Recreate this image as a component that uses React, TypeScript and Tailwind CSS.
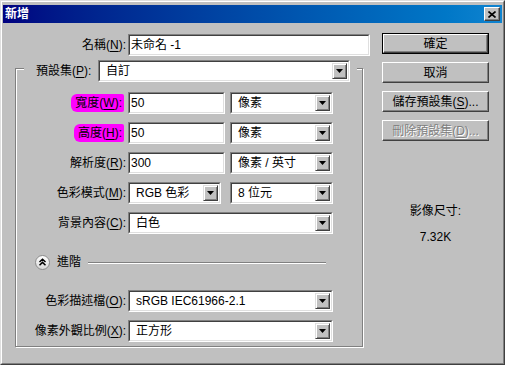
import type { ReactNode } from "react";

// Classic Win9x "New" dialog (Photoshop, zh-TW).
const FONT = "font-['Liberation_Sans','Noto_Sans_CJK_TC',sans-serif]";

function Key({ children }: { children: ReactNode }) {
  return <span className="underline underline-offset-[2px]">{children}</span>;
}

function Arrow() {
  return (
    <div className="mr-[1px] flex h-[16px] w-[15px] items-center justify-center border border-t-[#dfdfdf] border-l-[#dfdfdf] border-b-[#404040] border-r-[#404040] bg-[#c0c0c0] shadow-[inset_1px_1px_0_#fff,inset_-1px_-1px_0_#808080]">
      <svg width="7" height="4" viewBox="0 0 7 4">
        <path d="M0 0h7L3.5 4z" fill="#000" />
      </svg>
    </div>
  );
}

/** Sunken 2px field frame, used by text boxes and drop-downs alike. */
function Field({ w, select, children }: { w: string; select?: boolean; children: ReactNode }) {
  return (
    <div className={`h-[22px] shrink-0 border border-t-[#808080] border-l-[#808080] border-b-white border-r-white ${w}`}>
      <div className="flex h-full items-center border border-t-[#404040] border-l-[#404040] border-b-[#dfdfdf] border-r-[#dfdfdf] bg-white">
        <span className={`flex-1 truncate leading-[16px] ${select ? "pl-[6px]" : "pl-[1px]"}`}>{children}</span>
        {select && <Arrow />}
      </div>
    </div>
  );
}

function Label({ children, pink }: { children: ReactNode; pink?: boolean }) {
  return (
    <div className="mr-[2px] w-[110px] shrink-0 text-right">
      {pink ? (
        <span className="mr-[2px] inline-block h-[18px] rounded-l-[6px] rounded-r-[2px] bg-[#ff00ff] pl-[4px] pr-[2px] leading-[18px]">
          {children}
        </span>
      ) : (
        children
      )}
    </div>
  );
}

function Row({ children }: { children: ReactNode }) {
  return <div className="flex h-[22px] items-center">{children}</div>;
}

function Btn({ children, def, disabled }: { children: ReactNode; def?: boolean; disabled?: boolean }) {
  const face = (
    <div
      className={`flex items-center justify-center border border-t-white border-l-white border-b-[#404040] border-r-[#404040] bg-[#c0c0c0] shadow-[inset_-1px_-1px_0_#808080] ${
        def ? "h-[19px]" : "h-[21px]"
      } ${disabled ? "text-[#808080] [text-shadow:1px_1px_0_#fff]" : ""}`}
    >
      {children}
    </div>
  );
  return def ? <div className="border border-black">{face}</div> : face;
}

function TitleBar() {
  return (
    <div className="flex h-[18px] items-center justify-between bg-gradient-to-r from-[#000080] to-[#1084d0] pl-[2px] pr-[2px]">
      <span className="text-[12px] font-bold leading-[18px] text-white">新增</span>
      <div className="flex h-[14px] w-[16px] items-center justify-center border border-t-white border-l-white border-b-[#404040] border-r-[#404040] bg-[#c0c0c0] shadow-[inset_-1px_-1px_0_#808080]">
        <svg width="8" height="7" viewBox="0 0 8 7">
          <path d="M0.5 0.5L7.5 6.5M7.5 0.5L0.5 6.5" stroke="#000" strokeWidth="1.6" />
        </svg>
      </div>
    </div>
  );
}

export default function App() {
  return (
    <div
      className={`h-[365px] w-[505px] border border-t-[#dfdfdf] border-l-[#dfdfdf] border-b-[#404040] border-r-[#404040] bg-[#c0c0c0] text-[12px] text-black ${FONT}`}
    >
      <div className="h-full border border-t-white border-l-white border-b-[#808080] border-r-[#808080] px-[1px] pt-[3px]">
        <TitleBar />
        <div className="flex">
          {/* left: fields */}
          <div className="w-[367px]">
            <div className="mt-[11px] flex h-[22px] items-center">
              <div className="mr-[2px] w-[123px] text-right">
                名稱(<Key>N</Key>):
              </div>
              <Field w="w-[242px]">未命名 -1</Field>
            </div>

            <div className="ml-[12px] mt-[12px] h-[279px] w-[348px] border border-[#808080] shadow-[inset_1px_1px_0_#fff,1px_1px_0_#fff]">
              <div className="-mt-[9px] ml-[8px] flex w-[333px] items-center bg-[#c0c0c0] pr-[7px]">
                <div className="w-[74px] shrink-0 pl-[12px]">
                  預設集(<Key>P</Key>):
                </div>
                <Field w="w-[252px]" select>
                  自訂
                </Field>
              </div>

              <div className="mt-[10px] flex flex-col gap-[8px]">
                <Row>
                  <Label pink>
                    寬度(<Key>W</Key>):
                  </Label>
                  <Field w="w-[97px]">50</Field>
                  <div className="ml-[5px]">
                    <Field w="w-[103px]" select>
                      像素
                    </Field>
                  </div>
                </Row>
                <Row>
                  <Label pink>
                    高度(<Key>H</Key>):
                  </Label>
                  <Field w="w-[97px]">50</Field>
                  <div className="ml-[5px]">
                    <Field w="w-[103px]" select>
                      像素
                    </Field>
                  </div>
                </Row>
                <Row>
                  <Label>
                    解析度(<Key>R</Key>):
                  </Label>
                  <Field w="w-[97px]">300</Field>
                  <div className="ml-[5px]">
                    <Field w="w-[103px]" select>
                      像素 / 英寸
                    </Field>
                  </div>
                </Row>
                <Row>
                  <Label>
                    色彩模式(<Key>M</Key>):
                  </Label>
                  <Field w="w-[93px]" select>
                    RGB 色彩
                  </Field>
                  <div className="ml-[9px]">
                    <Field w="w-[103px]" select>
                      8 位元
                    </Field>
                  </div>
                </Row>
                <Row>
                  <Label>
                    背景內容(<Key>C</Key>):
                  </Label>
                  <Field w="w-[205px]" select>
                    白色
                  </Field>
                </Row>
              </div>

              <div className="mt-[21px] flex h-[15px] items-center pl-[19px]">
                <svg width="15" height="15" viewBox="0 0 15 15">
                  <defs>
                    <linearGradient id="adv" x1="0" y1="0" x2="0" y2="1">
                      <stop offset="0" stopColor="#ffffff" />
                      <stop offset="1" stopColor="#d8d8d8" />
                    </linearGradient>
                  </defs>
                  <circle cx="7.5" cy="7.5" r="7" fill="url(#adv)" stroke="#8a8a8a" />
                  <path d="M4.5 7L7.5 4.2L10.5 7M4.5 10.2L7.5 7.4L10.5 10.2" fill="none" stroke="#000" strokeWidth="1.5" />
                </svg>
                <span className="ml-[7px] leading-[15px]">進階</span>
                <div className="ml-[7px] h-[2px] w-[238px] border-t border-b border-t-[#808080] border-b-white" />
              </div>

              <div className="mt-[20px] flex flex-col gap-[8px]">
                <Row>
                  <Label>
                    色彩描述檔(<Key>O</Key>):
                  </Label>
                  <Field w="w-[205px]" select>
                    sRGB IEC61966-2.1
                  </Field>
                </Row>
                <Row>
                  <Label>
                    像素外觀比例(<Key>X</Key>):
                  </Label>
                  <Field w="w-[205px]" select>
                    正方形
                  </Field>
                </Row>
              </div>
            </div>
          </div>

          {/* right: buttons + size */}
          <div className="ml-[12px] mt-[10px] w-[107px]">
            <div className="flex flex-col gap-[8px]">
              <Btn def>確定</Btn>
              <Btn>取消</Btn>
              <Btn>
                儲存預設集(<Key>S</Key>)...
              </Btn>
              <Btn disabled>
                刪除預設集(<Key>D</Key>)...
              </Btn>
            </div>
            <div className="mt-[63px] text-center leading-[14px]">影像尺寸:</div>
            <div className="mt-[12px] text-center leading-[14px]">7.32K</div>
          </div>
        </div>
      </div>
    </div>
  );
}
